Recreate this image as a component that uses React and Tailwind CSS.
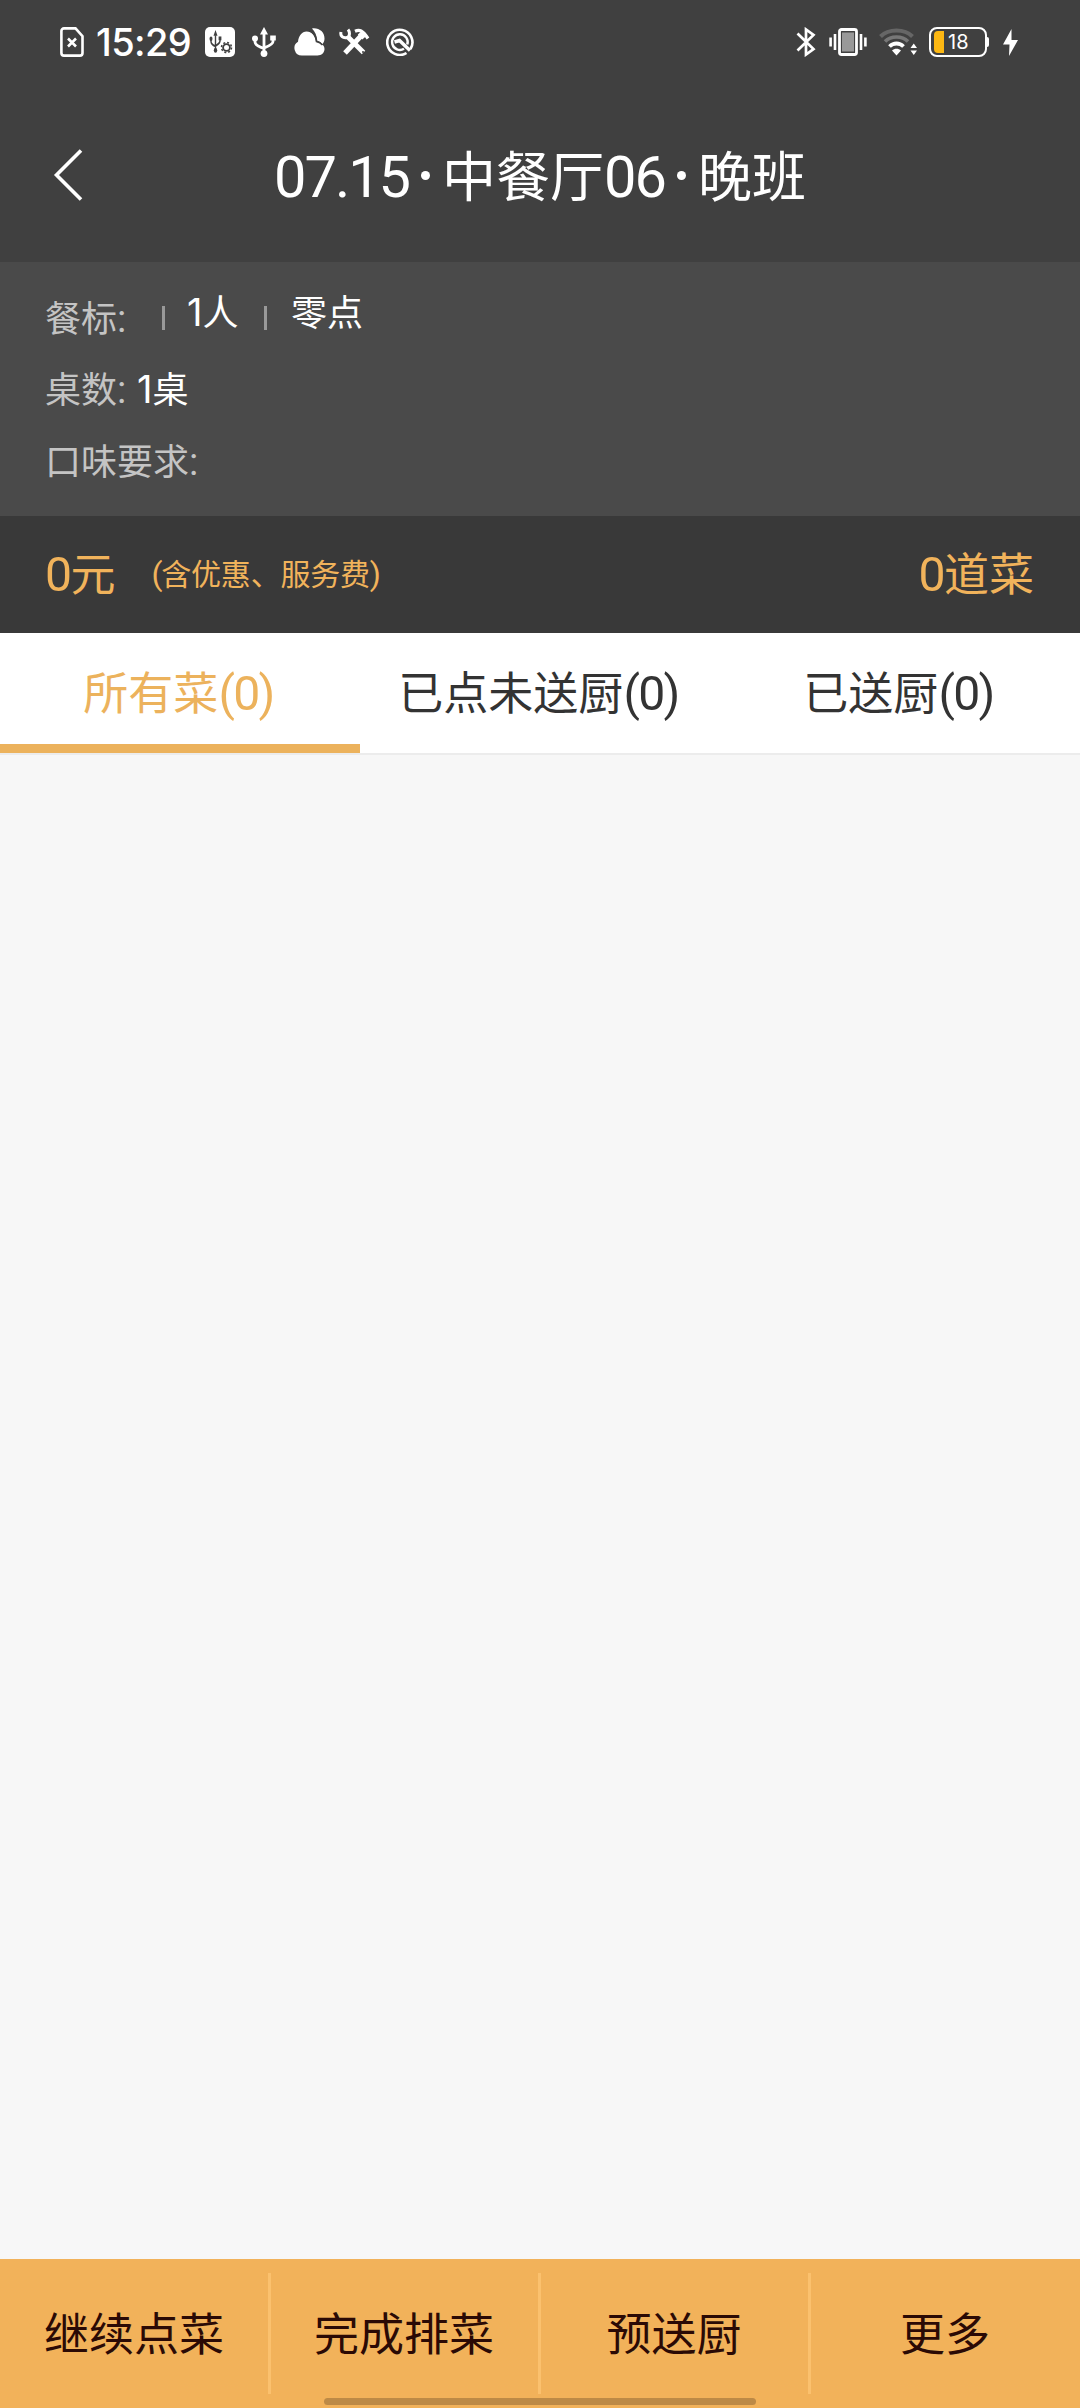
import { useState } from "react";

const SimIcon = () => (
  <svg className="w-6 h-[30px]" viewBox="0 0 24 30" fill="none" stroke="#fff" strokeWidth="2.6">
    <path d="M4 1.4h11.5l7 7.8V26a2.6 2.6 0 0 1-2.6 2.6H4A2.6 2.6 0 0 1 1.4 26V4A2.6 2.6 0 0 1 4 1.4Z" />
    <path d="m8 11.5 8 8m0-8-8 8" />
  </svg>
);

const UsbShape = () => (
  <g>
    <path d="M12 7v19M3 11v4c0 3 4.500 5 9 6.500M21 11v3.500c0 3-4.500 4.500-9 6.500" fill="none" stroke="currentColor" strokeWidth="2.800" />
    <path d="M12 0 16 7.500H8Z" fill="currentColor" />
    <circle cx="3" cy="11.500" r="3" fill="currentColor" />
    <path d="M18.200 8.500h5.600v5h-5.600z" fill="currentColor" />
    <circle cx="12" cy="26.600" r="3.400" fill="currentColor" />
  </g>
);

const UsbSettingsIcon = () => (
  <svg className="w-[30px] h-[30px] text-[#404040]" viewBox="0 0 30 30">
    <rect width="30" height="30" rx="5" fill="#fff" />
    <g transform="translate(4.500 3) scale(.5 .76)">
      <UsbShape />
    </g>
    <circle cx="21.500" cy="20.500" r="6.400" fill="#fff" />
    <circle cx="21.500" cy="20.500" r="3.400" fill="none" stroke="currentColor" strokeWidth="1.800" />
    <circle cx="21.500" cy="20.500" r="5" fill="none" stroke="currentColor" strokeWidth="1.500" strokeDasharray="2 1.927" />
  </svg>
);

const UsbIcon = () => (
  <svg className="w-6 h-[30px] text-white" viewBox="0 0 24 30">
    <UsbShape />
  </svg>
);

const CloudIcon = () => (
  <svg className="w-[31px] h-[28px]" viewBox="0 0 31 28" fill="#fff">
    <path d="M18 .5C25-.5 30.500 4 30.500 10.500c0 2.300-.8 4.200-2.200 5.800-1.300-1.800-3-3-5-3.600C22.800 7.500 21 3.500 18 .5Z" />
    <path d="M8 27.500A7.400 7.400 0 0 1 4 13.800C4.500 8 8 3.500 12.500 3.500c5.500 0 9 4.500 9.500 10.500 5 .5 8.500 3 8.500 7 0 3.700-3 6.500-7 6.500Z" />
    <path d="M15.500 2.500c4.300 2 6.400 5.500 7 11 2.500.5 4.300 1.500 6 3.500" fill="none" stroke="#404040" strokeWidth="1.500" />
  </svg>
);

const ToolsIcon = () => (
  <svg className="w-[31px] h-[28px]" viewBox="0 0 31 28" fill="none" stroke="#fff">
    <path d="m9 9 15.500 15.500" strokeWidth="5" />
    <path d="M2 4C1 8 4 10.500 8 9.500c2.500-.5 3.500-5 1-8" strokeWidth="3" />
    <path d="M6 25 21.500 8.500" strokeWidth="5" />
    <path d="M16 3.200c4.500-2 7.500-1 13 7.300" strokeWidth="3.200" />
    <path d="m20.500 5 4.500 5" strokeWidth="4.500" />
    <circle cx="24" cy="24" r="1" fill="#404040" stroke="none" />
  </svg>
);

const RadarIcon = () => (
  <svg className="w-7 h-7" viewBox="0 0 28 28" fill="none" stroke="#fff">
    <path d="M20.500 25A12.600 12.600 0 1 1 24.500 21" strokeWidth="2.600" />
    <path d="M18 20.700A7.800 7.800 0 1 1 21.300 16.500" strokeWidth="2.400" />
    <path d="m8.500 14 5-1.500L24 22.500" strokeWidth="3.400" />
  </svg>
);

const BluetoothIcon = () => (
  <svg className="w-5 h-[30px]" viewBox="0 0 20 30" fill="none" stroke="#fff" strokeWidth="2.700">
    <path d="m1.500 6.500 16 15.500L10 27.500v-25L17.500 8l-16 15.500" />
  </svg>
);

const VibrateIcon = () => (
  <svg className="w-[38px] h-[30px]" viewBox="0 0 38 30" fill="none" stroke="#fff">
    <rect x="10.500" y="2.500" width="17" height="25" rx="2" fill="#404040" strokeWidth="2.800" />
    <rect x="13" y="5.500" width="12" height="19" fill="#999" stroke="none" />
    <path d="M6 7v16M32 7v16" strokeWidth="2.600" />
    <path d="M1.600 10.500v9M36.400 10.500v9" strokeWidth="2.600" />
  </svg>
);

const WifiIcon = () => (
  <svg className="w-[38px] h-[28px]" viewBox="0 0 38 28" fill="none">
    <path d="M1.500 8.500c8-8 24-8 32 0" stroke="#666" strokeWidth="4" />
    <path d="M6 13.500c6-6 17-6 23 0" stroke="#777" strokeWidth="3.600" />
    <path d="M10.500 18.500c4-4 10-4 14 0" stroke="#fff" strokeWidth="3.800" />
    <path d="M13 22.500c2.500-2.200 6.500-2.200 9 0L17.500 27.500ZM31.500 20h6.500l-3.250-4.500ZM31.500 22.500h6.500L34.750 27Z" fill="#fff" />
  </svg>
);

const BoltIcon = () => (
  <svg className="w-[15px] h-[27px]" viewBox="0 0 15 27" fill="#fff">
    <path d="M8.500 0 0 15.500h6.500L6 27l9-16H8.500Z" />
  </svg>
);

// digits and brackets sit a little taller than the Chinese characters
const Num = ({ children }) => (
  <span className="text-[1.07em] leading-none tracking-[-0.035em]">{children}</span>
);

// Inter has a narrow 1, so it stays close to its unit
const One = () => <span className="text-[38px] leading-none font-[Inter,sans-serif]">1</span>;

const Dot = () => <span className="inline-block w-[9px] h-[9px] mx-3 rounded-full bg-white align-[17px]" />;

const tabs = [
  { name: "所有菜", count: 0 },
  { name: "已点未送厨", count: 0 },
  { name: "已送厨", count: 0 },
];

const actions = ["继续点菜", "完成排菜", "预送厨", "更多"];

const App = () => {
  const [active, setActive] = useState(0);

  return (
    <main className="flex flex-col w-[1080px] h-[2408px] bg-[#f7f7f7] font-[Roboto,'Noto_Sans_CJK_SC',sans-serif] whitespace-nowrap">
      <div className="flex items-center justify-between h-[84px] pl-[60px] pr-[62px] bg-[#404040]">
        <div className="flex items-center">
          <SimIcon />
          <span className="w-[96px] ml-[12px] mr-[13px] text-[38px] leading-none font-medium tracking-[-0.6px] text-white font-[Inter,sans-serif]">
            15:29
          </span>
          <div className="flex items-center">
            <UsbSettingsIcon />
            <div className="ml-[17px] mr-[18px]">
              <UsbIcon />
            </div>
            <CloudIcon />
            <div className="ml-[14px] mr-4">
              <ToolsIcon />
            </div>
            <RadarIcon />
          </div>
        </div>
        <div className="flex items-center">
          <BluetoothIcon />
          <div className="ml-[13px] mr-3">
            <VibrateIcon />
          </div>
          <WifiIcon />
          <div className="flex items-center ml-3 mr-[14px]">
            <div className="flex items-center w-[58px] h-[30px] p-[3px] border-2 border-white rounded-lg">
              <div className="w-[10px] h-[22px] rounded-l-sm bg-[#fdb813]" />
              <span className="ml-1 text-[20px] leading-none text-white font-[Inter,sans-serif]">18</span>
            </div>
            <div className="w-[2px] h-[10px] rounded-r-sm bg-white" />
          </div>
          <BoltIcon />
        </div>
      </div>

      <header className="grid grid-cols-[160px_1fr_160px] items-center h-[178px] pt-[3px] bg-[#404040] text-white">
        <button type="button" aria-label="返回" className="pl-[53px]">
          <svg className="w-[30px] h-[52px]" viewBox="0 0 30 52" fill="none" stroke="#fff" strokeWidth="3.600">
            <path d="M28 1.500 3.500 26 28 50.500" />
          </svg>
        </button>
        <h1 className="pt-[9px] text-center text-[54px] leading-[80px]">
          <Num>07.15</Num>
          <Dot />
          中餐厅<Num>06</Num>
          <Dot />
          晚班
        </h1>
      </header>

      <section className="h-[254px] pl-[45px] pt-[21px] bg-[#4a4a4a] text-4xl text-[#c4c4c4]">
        <div className="flex h-[72px] leading-[72px]">
          <span className="pt-px">餐标<Num>:</Num></span>
          <span className="w-[3px] h-6 mt-[23px] ml-[37px] bg-[#999]" />
          <span className="w-[52px] -mt-[5px] ml-[22px] text-white"><One />人</span>
          <span className="w-[3px] h-6 mt-[23px] ml-[25px] bg-[#999]" />
          <span className="-mt-[5px] ml-[24px] text-white">零点</span>
        </div>
        <div className="h-[72px] leading-[72px]">
          桌数<Num>:</Num>
          <span className="ml-3 text-white"><One />桌</span>
        </div>
        <div className="h-[72px] leading-[72px]">
          口味要求<Num>:</Num>
        </div>
      </section>

      <section className="flex items-center justify-between h-[117px] pl-[45px] pr-[46px] bg-[#393939] text-[#f1b35b]">
        <div className="flex items-center">
          <span className="pt-[3px] text-[45px]"><Num>0</Num>元</span>
          <span className="ml-[36px] text-[30px] tracking-[-0.2px]">
            <Num>(</Num>含优惠、服务费<Num>)</Num>
          </span>
        </div>
        <span className="pt-[3px] text-[45px]"><Num>0</Num>道菜</span>
      </section>

      <nav className="grid grid-cols-3 h-[122px] bg-white border-b-2 border-[#ececec]">
        {tabs.map((tab, i) => (
          <button
            key={tab.name}
            type="button"
            onClick={() => setActive(i)}
            className={`pt-3 pr-[3px] border-b-[9px] text-[45px] ${
              active === i
                ? "border-[#ecb25c] text-[#ecb25c]"
                : "border-transparent text-[#333]"
            }`}
          >
            {tab.name}
            <Num>({tab.count})</Num>
          </button>
        ))}
      </nav>

      <div className="flex-1" />

      <footer className="relative grid grid-cols-4 h-[149px] bg-[#f2b25a]">
        {actions.map((action, i) => (
          <div key={action} className="flex py-[14px]">
            <button type="button" className="flex-1 pt-[5px] text-[45px] text-[#2b0a05]">
              {action}
            </button>
            {i < actions.length - 1 && <span className="w-[3px] -mr-px bg-[#fbc16e]" />}
          </div>
        ))}
        <div className="absolute bottom-[3px] left-[324px] w-[432px] h-[7px] rounded-full bg-[#bd8a46]" />
      </footer>
    </main>
  );
};

export default App;
